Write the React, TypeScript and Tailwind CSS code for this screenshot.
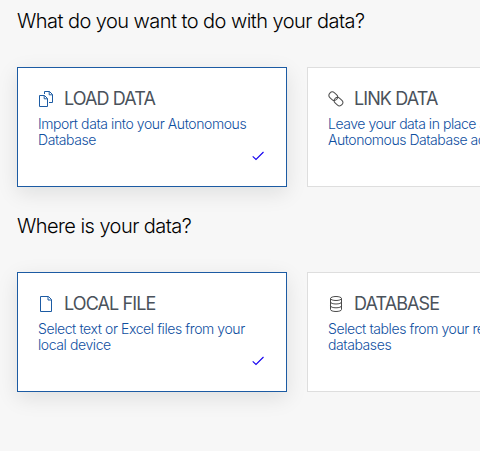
import type { ReactNode } from "react";

type CardProps = {
  icon: ReactNode;
  title: string;
  lines: string[];
  selected?: boolean;
  tight?: boolean;
};

function CopyIcon() {
  return (
    <svg className="block size-4" viewBox="0 0 16 16" fill="none" stroke="#1c5ba3">
      <path d="M1.5 4.5H6.5L9.5 7.5V15.5H1.5Z" />
      <path d="M6.2 4.5V7.8H9.5" />
      <path d="M6.5 3V.5H11.5L14.5 3.5V11.5H11" />
      <path d="M11.2 .5V3.8H14.5" />
    </svg>
  );
}

function FileIcon() {
  return (
    <svg className="block size-4" viewBox="0 0 16 16" fill="none" stroke="#1c5ba3">
      <path d="M2.5 .5H10.5L13.5 3.5V15.5H2.5Z" />
      <path d="M10 .5V4H13.5" />
    </svg>
  );
}

function LinkIcon() {
  return (
    <svg className="block size-4" viewBox="0 0 16 16" fill="none" stroke="#4d4d4d">
      <rect x="-4.6" y="-3.3" width="9.2" height="6.6" rx="3.3" transform="translate(5.3 5.2) rotate(42)" />
      <rect x="-4.6" y="-3.3" width="9.2" height="6.6" rx="3.3" transform="translate(10.5 10.6) rotate(42)" />
    </svg>
  );
}

function DatabaseIcon() {
  return (
    <svg className="block size-4" viewBox="0 0 16 16" fill="none" stroke="#4a4a4a">
      <ellipse cx="8" cy="2.5" rx="5.5" ry="2" />
      <path d="M2.5 2.5V13.5C2.5 14.7 5 15.5 8 15.5S13.5 14.7 13.5 13.5V2.5" />
      <path d="M2.5 6C2.5 7.2 5 8 8 8S13.5 7.2 13.5 6" />
      <path d="M2.5 9.8C2.5 11 5 11.8 8 11.8S13.5 11 13.5 9.8" />
    </svg>
  );
}

function Card({ icon, title, lines, selected, tight }: CardProps) {
  return (
    <div
      className={`flex h-[120px] w-[270px] shrink-0 flex-col border bg-white px-5 pt-[19px] ${
        selected ? "border-[#1c5ba3] shadow-[0_6px_20px_rgba(0,20,20,0.1)]" : "border-[#dedede]"
      }`}
    >
      <div className="flex h-6 items-center gap-2.5">
        {icon}
        <span className="whitespace-nowrap text-lg leading-6 tracking-[-0.9px] text-[#4a525b]">{title}</span>
      </div>
      <div
        className={`mt-[5px] text-sm leading-4 font-light text-[#0f4f9f] ${
          tight ? "tracking-[-0.46px]" : "tracking-[-0.41px]"
        }`}
      >
        {lines.map((line) => (
          <div key={line} className="whitespace-nowrap">
            {line}
          </div>
        ))}
      </div>
      {selected && (
        <svg className="mt-[3px] mr-[2px] h-[10px] w-3 self-end" viewBox="0 0 12 10" fill="none" stroke="#1400f0" strokeWidth="1.1">
          <path d="M.7 5.3L4 8.5L11.5 1" />
        </svg>
      )}
    </div>
  );
}

export default function App() {
  return (
    <main className="h-[451px] w-[480px] overflow-hidden bg-[#f7f7f7] pl-[17px] font-['Inter',sans-serif]">
      <h1 className="flex h-[67px] pt-[7px] text-xl leading-7 font-light whitespace-nowrap text-black tracking-[-0.55px]">
        What do you want to do with your data?
      </h1>
      <div className="flex gap-5">
        <Card selected icon={<CopyIcon />} title="LOAD DATA" lines={["Import data into your Autonomous", "Database"]} />
        <Card tight icon={<LinkIcon />} title="LINK DATA" lines={["Leave your data in place and", "Autonomous Database access"]} />
      </div>
      <h2 className="flex h-[85px] pt-[25px] text-xl leading-7 font-light whitespace-nowrap text-black tracking-[-0.55px]">
        Where is your data?
      </h2>
      <div className="flex gap-5">
        <Card selected icon={<FileIcon />} title="LOCAL FILE" lines={["Select text or Excel files from your", "local device"]} />
        <Card icon={<DatabaseIcon />} title="DATABASE" lines={["Select tables from your remote", "databases"]} />
      </div>
    </main>
  );
}
